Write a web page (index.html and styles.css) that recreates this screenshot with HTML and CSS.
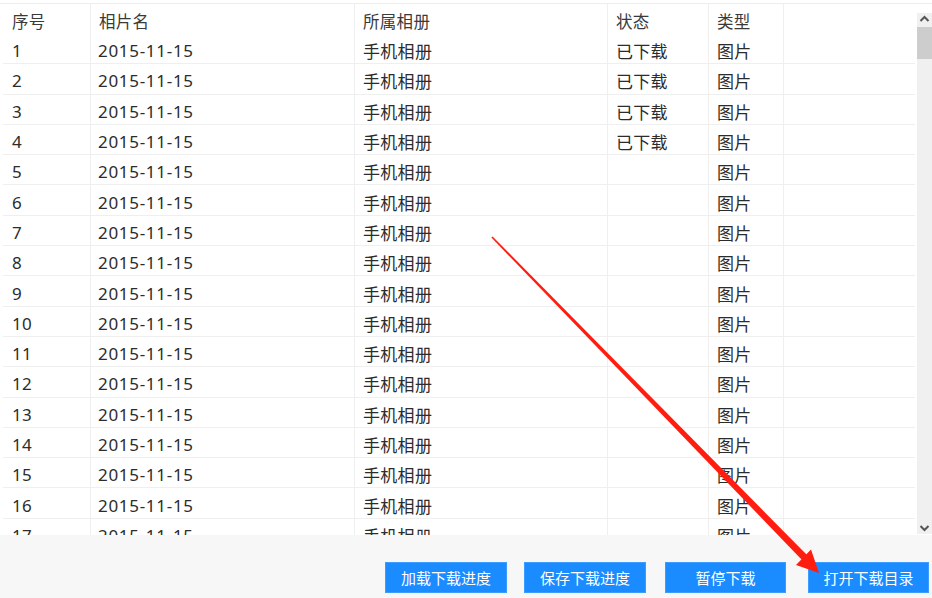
FILE: index.html
```html
<!DOCTYPE html>
<html lang="zh">
<head>
<meta charset="utf-8">
<title>下载列表</title>
<link rel="stylesheet" href="styles.css">
</head>
<body>
<div class="page">
  <div class="list-area">
    <div class="grid">
      <div class="row head">
        <div class="cell c1">序号</div><div class="cell">相片名</div><div class="cell">所属相册</div><div class="cell">状态</div><div class="cell">类型</div><div class="cell fill"></div>
      </div>
      <div class="row"><div class="cell c1">1</div><div class="cell num">2015-11-15</div><div class="cell">手机相册</div><div class="cell">已下载</div><div class="cell">图片</div><div class="cell fill"></div></div>
      <div class="row"><div class="cell c1">2</div><div class="cell num">2015-11-15</div><div class="cell">手机相册</div><div class="cell">已下载</div><div class="cell">图片</div><div class="cell fill"></div></div>
      <div class="row"><div class="cell c1">3</div><div class="cell num">2015-11-15</div><div class="cell">手机相册</div><div class="cell">已下载</div><div class="cell">图片</div><div class="cell fill"></div></div>
      <div class="row"><div class="cell c1">4</div><div class="cell num">2015-11-15</div><div class="cell">手机相册</div><div class="cell">已下载</div><div class="cell">图片</div><div class="cell fill"></div></div>
      <div class="row"><div class="cell c1">5</div><div class="cell num">2015-11-15</div><div class="cell">手机相册</div><div class="cell"></div><div class="cell">图片</div><div class="cell fill"></div></div>
      <div class="row"><div class="cell c1">6</div><div class="cell num">2015-11-15</div><div class="cell">手机相册</div><div class="cell"></div><div class="cell">图片</div><div class="cell fill"></div></div>
      <div class="row"><div class="cell c1">7</div><div class="cell num">2015-11-15</div><div class="cell">手机相册</div><div class="cell"></div><div class="cell">图片</div><div class="cell fill"></div></div>
      <div class="row"><div class="cell c1">8</div><div class="cell num">2015-11-15</div><div class="cell">手机相册</div><div class="cell"></div><div class="cell">图片</div><div class="cell fill"></div></div>
      <div class="row"><div class="cell c1">9</div><div class="cell num">2015-11-15</div><div class="cell">手机相册</div><div class="cell"></div><div class="cell">图片</div><div class="cell fill"></div></div>
      <div class="row"><div class="cell c1">10</div><div class="cell num">2015-11-15</div><div class="cell">手机相册</div><div class="cell"></div><div class="cell">图片</div><div class="cell fill"></div></div>
      <div class="row"><div class="cell c1">11</div><div class="cell num">2015-11-15</div><div class="cell">手机相册</div><div class="cell"></div><div class="cell">图片</div><div class="cell fill"></div></div>
      <div class="row"><div class="cell c1">12</div><div class="cell num">2015-11-15</div><div class="cell">手机相册</div><div class="cell"></div><div class="cell">图片</div><div class="cell fill"></div></div>
      <div class="row"><div class="cell c1">13</div><div class="cell num">2015-11-15</div><div class="cell">手机相册</div><div class="cell"></div><div class="cell">图片</div><div class="cell fill"></div></div>
      <div class="row"><div class="cell c1">14</div><div class="cell num">2015-11-15</div><div class="cell">手机相册</div><div class="cell"></div><div class="cell">图片</div><div class="cell fill"></div></div>
      <div class="row"><div class="cell c1">15</div><div class="cell num">2015-11-15</div><div class="cell">手机相册</div><div class="cell"></div><div class="cell">图片</div><div class="cell fill"></div></div>
      <div class="row"><div class="cell c1">16</div><div class="cell num">2015-11-15</div><div class="cell">手机相册</div><div class="cell"></div><div class="cell">图片</div><div class="cell fill"></div></div>
      <div class="row"><div class="cell c1">17</div><div class="cell num">2015-11-15</div><div class="cell">手机相册</div><div class="cell"></div><div class="cell">图片</div><div class="cell fill"></div></div>
    </div>
    <div class="scrollbar">
      <svg class="chev" width="15" height="12" viewBox="0 0 15 12"><path d="M3.5 8 L7.5 4 L11.5 8" fill="none" stroke="#555" stroke-width="2"/></svg>
      <div class="thumb"></div>
      <div class="track"></div>
      <svg class="chev" width="15" height="12" viewBox="0 0 15 12"><path d="M3.5 4 L7.5 8 L11.5 4" fill="none" stroke="#555" stroke-width="2"/></svg>
    </div>
  </div>
  <div class="actions">
    <button class="btn">加载下载进度</button>
    <button class="btn b2">保存下载进度</button>
    <button class="btn b3">暂停下载</button>
    <button class="btn b4">打开下载目录</button>
  </div>
  <svg class="annot" width="932" height="598" viewBox="0 0 932 598">
    <polygon points="491.4,237.6 492.6,236.4 808,556 803,561" fill="#ff1d10"/>
    <polygon points="819,573 796,565 811,549.5" fill="#ff1d10"/>
  </svg>
</div>
</body>
</html>
```

FILE: styles.css
```css
* { box-sizing: border-box; }
html, body { margin: 0; padding: 0; background: #fff; }
body {
  font-family: "Noto Sans", "Noto Sans CJK SC", sans-serif;
  color: #2c2c2c;
}
.page {
  position: relative;
  width: 932px;
  height: 598px;
  overflow: hidden;
  padding-top: 3px;
}
.list-area {
  display: flex;
  height: 532px;
  border-top: 1px solid #ededed;
  padding-left: 3px;
}
.grid {
  flex: 1;
  overflow: hidden;
}
.row {
  display: grid;
  grid-template-columns: 88px 264px 253px 101px 75px 1fr;
  height: 30.3px;
  border-bottom: 1px solid #efefef;
  font-size: 17px;
  letter-spacing: 0.3px;
}
.row.head {
  height: 30px;
  border-bottom: none;
  color: #3a3a3a;
  font-size: 16.5px;
}
.cell {
  display: flex;
  align-items: center;
  padding: 4px 0 0 8px;
  border-right: 1px solid #efefef;
  white-space: nowrap;
}
.cell.c1 { padding-left: 9px; }
.cell.fill { border-right: none; }
.cell.num { padding-left: 7px; letter-spacing: 0.7px; }
.scrollbar {
  width: 15px;
  margin-left: 2px;
  margin-top: 9px;
  margin-bottom: 1px;
  background: #f0f0f0;
  display: flex;
  flex-direction: column;
}
.chev { display: block; }
.thumb {
  height: 32px;
  margin-top: 2px;
  background: #cdcdcd;
}
.track { flex: 1; }
.actions {
  height: 63px;
  background: #f7f7f8;
  display: flex;
  justify-content: flex-end;
  align-items: flex-start;
  padding: 27px 3px 0 0;
}
.btn {
  width: 122px;
  height: 31px;
  border: 1px solid #3a9dff;
  background: #1a8cff;
  color: #fff;
  font-family: "Noto Sans CJK SC", sans-serif;
  font-size: 15px;
  padding: 0;
  border-radius: 0;
}
.b2 { margin-left: 17px; }
.b3 { margin-left: 19px; width: 121px; }
.b4 { margin-left: 22px; width: 121px; }
.annot {
  position: absolute;
  left: 0;
  top: 0;
  pointer-events: none;
}
```
